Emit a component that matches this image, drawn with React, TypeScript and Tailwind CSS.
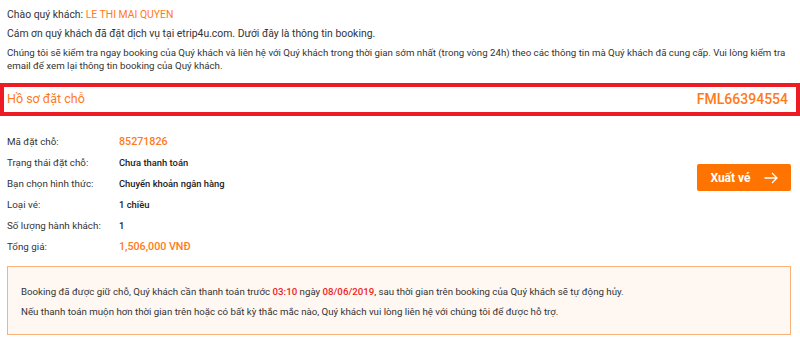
import { FC } from 'react';

const rows: { label: string; value: string; accent?: boolean }[] = [
  { label: 'Mã đặt chỗ:', value: '85271826', accent: true },
  { label: 'Trạng thái đặt chỗ:', value: 'Chưa thanh toán' },
  { label: 'Bạn chọn hình thức:', value: 'Chuyển khoản ngân hàng' },
  { label: 'Loại vé:', value: '1 chiều' },
  { label: 'Số lượng hành khách:', value: '1' },
  { label: 'Tổng giá:', value: '1,506,000 VNĐ', accent: true },
];

const App: FC = () => (
  <div className="w-[800px] h-[342px] bg-white font-['Roboto',sans-serif] text-[10.4px] text-[#333] overflow-hidden">
    <div className="px-[7px] pt-[8px]">
      <p className="leading-[13px]">
        Chào quý khách: <span className="text-[#ff7a1a]">LE THI MAI QUYEN</span>
      </p>
      <p className="mt-[6px] leading-[13px]">
        Cám ơn quý khách đã đặt dịch vụ tại etrip4u.com. Dưới đây là thông tin booking.
      </p>
      <p className="mt-[6px] leading-[13px] text-[9.7px]">
        Chúng tôi sẽ kiểm tra ngay booking của Quý khách và liên hệ với Quý khách trong thời gian sớm nhất (trong vòng 24h) theo các thông tin mà Quý khách đã cung cấp. Vui lòng kiểm tra email để xem lại thông tin booking của Quý khách.
      </p>
    </div>

    <div className="mt-[11px] h-[33px] border-[4px] border-[#ed1c24] flex items-center justify-between pl-[3px] pr-[8px] text-[#ff7a1a]">
      <span className="text-[12.5px]">Hồ sơ đặt chỗ</span>
      <span className="text-[14px] font-medium">FML66394554</span>
    </div>

    <div className="flex items-start px-[7px] pt-[19px] text-[9.8px]">
      <div className="flex flex-col gap-[8px]">
        {rows.map((r) => (
          <div key={r.label} className="flex items-center h-[13px] leading-[13px]">
            <span className="w-[112px]">{r.label}</span>
            <span
              className={
                r.accent
                  ? 'text-[#ff7a1a] font-medium text-[10.7px]'
                  : 'text-[#222] font-medium text-[9.4px]'
              }
            >
              {r.value}
            </span>
          </div>
        ))}
      </div>
      <button className="ml-auto mr-[2px] mt-[29px] w-[94px] h-[27px] bg-[#ff7300] rounded-[2px] text-white font-bold text-[12px] flex items-center justify-center gap-[13px]">
        <span>Xuất vé</span>
        <svg width="14" height="12" viewBox="0 0 14 12" fill="none" stroke="white" strokeWidth="1.3">
          <path d="M0.5 6H13M8 1l5 5-5 5" />
        </svg>
      </button>
    </div>

    <div className="ml-[7px] mr-[9px] mt-[13px] h-[69px] border border-[#f8b27a] bg-[#fff7f2] px-[13px] pt-[18px] flex flex-col gap-[7px] leading-[13px] text-[9.7px]">
      <p>
        Booking đã được giữ chỗ, Quý khách cần thanh toán trước{' '}
        <span className="text-[#f01c1c] font-medium">03:10</span> ngày{' '}
        <span className="text-[#f01c1c] font-medium">08/06/2019</span>, sau thời gian trên booking của Quý khách sẽ tự động hủy.
      </p>
      <p>
        Nếu thanh toán muộn hơn thời gian trên hoặc có bất kỳ thắc mắc nào, Quý khách vui lòng liên hệ với chúng tôi để được hỗ trợ.
      </p>
    </div>
  </div>
);

export default App;
